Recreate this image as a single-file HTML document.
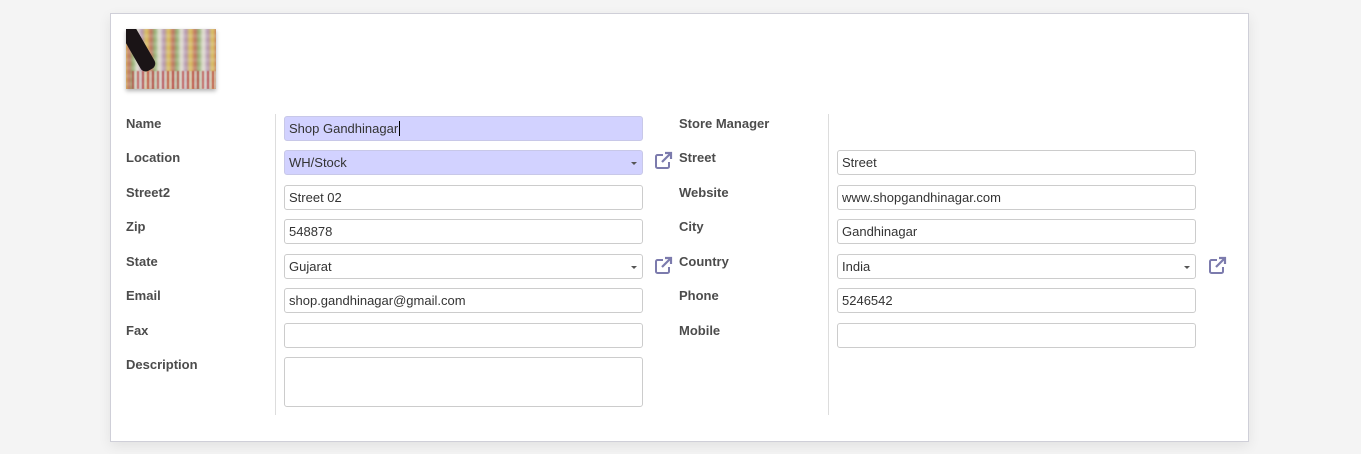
<!DOCTYPE html>
<html><head><style>
body{margin:0;width:1361px;height:454px;background:#f4f4f4;font-family:"Liberation Sans",sans-serif;position:relative;overflow:hidden}
.sheet{position:absolute;left:110px;top:13px;width:1137px;height:427px;background:#fff;border:1px solid #cfcfd8;box-shadow:0 4px 12px rgba(0,0,0,.08)}
.img{position:absolute;left:126px;top:29px;width:90px;height:60px;box-shadow:0 2px 4px rgba(0,0,0,.3);overflow:hidden;background:#c8b8a0}
.img i{position:absolute;left:-4px;top:-4px;width:98px;height:68px;filter:blur(1.5px);background:repeating-linear-gradient(0deg,rgba(255,255,255,.3) 0 2px,transparent 2px 8px),repeating-linear-gradient(90deg,#d8c060 0 5px,#c07060 5px 9px,#90b070 9px 13px,#e0dcd0 13px 18px,#b090b0 18px 22px)}
.img b{position:absolute;left:4px;top:-6px;width:16px;height:50px;background:#1a1416;transform:rotate(-30deg);border-radius:6px}
.img u{position:absolute;left:6px;top:42px;width:84px;height:18px;background:repeating-linear-gradient(90deg,#b84040 0 2px,#d8d0c8 2px 5px);opacity:.7;filter:blur(.5px)}
.l{position:absolute;font-size:13px;font-weight:bold;color:#4c4c4c}
.i{position:absolute;border:1px solid #ccc;border-radius:3px;font-size:13px;color:#333;line-height:23px;padding-left:4px;box-sizing:border-box;height:25px}
.r{background:#d2d2ff;border-color:#c8c8e8}
.s:after{content:"";position:absolute;right:5px;top:11px;border:3px solid transparent;border-top:3px solid #555;border-bottom:0}
.v{position:absolute;width:1px;background:#ddd;top:114px;height:301px}
svg{position:absolute}
</style></head><body>
<div class="sheet"></div>
<div class="img"><i></i><u></u><b></b></div>
<div class="v" style="left:275px"></div>
<div class="v" style="left:828px"></div>
<div class="l" style="left:126px;top:116px">Name</div>
<div class="l" style="left:126px;top:150px">Location</div>
<div class="l" style="left:126px;top:185px">Street2</div>
<div class="l" style="left:126px;top:219px">Zip</div>
<div class="l" style="left:126px;top:254px">State</div>
<div class="l" style="left:126px;top:288px">Email</div>
<div class="l" style="left:126px;top:323px">Fax</div>
<div class="l" style="left:126px;top:357px">Description</div>
<div class="i r" style="left:284px;top:116px;width:359px">Shop Gandhinagar<span style="border-left:1px solid #000;margin-left:1px"></span></div>
<div class="i r s" style="left:284px;top:150px;width:359px">WH/Stock</div>
<div class="i" style="left:284px;top:185px;width:359px">Street 02</div>
<div class="i" style="left:284px;top:219px;width:359px">548878</div>
<div class="i s" style="left:284px;top:254px;width:359px">Gujarat</div>
<div class="i" style="left:284px;top:288px;width:359px">shop.gandhinagar@gmail.com</div>
<div class="i" style="left:284px;top:323px;width:359px"></div>
<div class="i" style="left:284px;top:357px;width:359px;height:50px"></div>
<div class="l" style="left:679px;top:116px">Store Manager</div>
<div class="l" style="left:679px;top:150px">Street</div>
<div class="l" style="left:679px;top:185px">Website</div>
<div class="l" style="left:679px;top:219px">City</div>
<div class="l" style="left:679px;top:254px">Country</div>
<div class="l" style="left:679px;top:288px">Phone</div>
<div class="l" style="left:679px;top:323px">Mobile</div>
<div class="i" style="left:837px;top:150px;width:359px">Street</div>
<div class="i" style="left:837px;top:185px;width:359px">www.shopgandhinagar.com</div>
<div class="i" style="left:837px;top:219px;width:359px">Gandhinagar</div>
<div class="i s" style="left:837px;top:254px;width:359px">India</div>
<div class="i" style="left:837px;top:288px;width:359px">5246542</div>
<div class="i" style="left:837px;top:323px;width:359px"></div>
<svg style="left:654px;top:151px" width="20" height="19" viewBox="0 0 20 19"><path d="M9 4H3.5A1.5 1.5 0 0 0 2 5.5v10A1.5 1.5 0 0 0 3.5 17h10a1.5 1.5 0 0 0 1.5-1.5V11" fill="none" stroke="#7c7bad" stroke-width="2"/><path d="M8 11L17 2M11 2h6v6" fill="none" stroke="#7c7bad" stroke-width="2.2"/></svg>
<svg style="left:654px;top:256px" width="20" height="19" viewBox="0 0 20 19"><path d="M9 4H3.5A1.5 1.5 0 0 0 2 5.5v10A1.5 1.5 0 0 0 3.5 17h10a1.5 1.5 0 0 0 1.5-1.5V11" fill="none" stroke="#7c7bad" stroke-width="2"/><path d="M8 11L17 2M11 2h6v6" fill="none" stroke="#7c7bad" stroke-width="2.2"/></svg>
<svg style="left:1208px;top:256px" width="20" height="19" viewBox="0 0 20 19"><path d="M9 4H3.5A1.5 1.5 0 0 0 2 5.5v10A1.5 1.5 0 0 0 3.5 17h10a1.5 1.5 0 0 0 1.5-1.5V11" fill="none" stroke="#7c7bad" stroke-width="2"/><path d="M8 11L17 2M11 2h6v6" fill="none" stroke="#7c7bad" stroke-width="2.2"/></svg>
</body></html>
